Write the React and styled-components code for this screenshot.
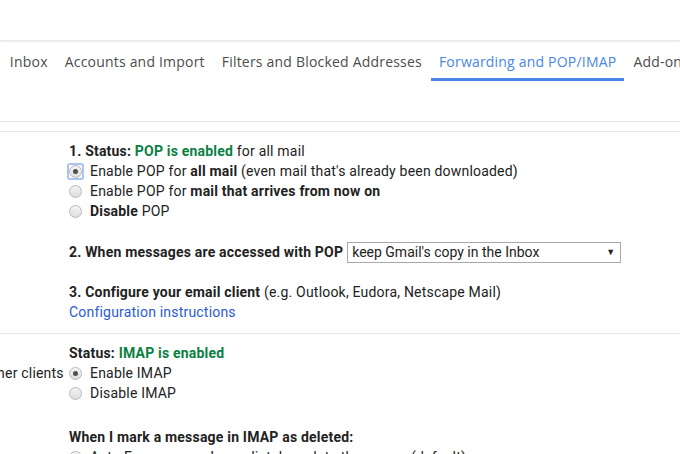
import React from 'react';
import styled, { createGlobalStyle } from 'styled-components';

// how far the settings page is scrolled to the right
const SCROLL = 187;

const GlobalStyle = createGlobalStyle`
  html, body {
    margin: 0;
    padding: 0;
    background: #fff;
    overflow: hidden;
  }
  body {
    font-family: Roboto, "Liberation Sans", Arial, sans-serif;
    color: #222;
  }
`;

const Viewport = styled.div`
  width: 680px;
  height: 454px;
  overflow: hidden;
`;

const TopBar = styled.div`
  height: 40px;
  background: #fff;
  border-bottom: 1px solid #e9e9e9;
  box-shadow: 0 1px 2px rgba(0, 0, 0, 0.07);
`;

const Page = styled.div`
  width: ${680 + SCROLL + 120}px;
  margin-left: -${SCROLL}px;
`;

const TabBar = styled.div`
  display: flex;
  gap: 1px;
  height: 40px;
  padding-left: 59px;
`;

const Tab = styled.div`
  display: flex;
  align-items: center;
  padding: 3px 8px 0;
  font-family: "Open Sans", Roboto, sans-serif;
  font-size: 14px;
  letter-spacing: 0.2px;
  white-space: nowrap;
  color: ${p => (p.$active ? '#4a86e8' : '#4d4d4d')};
  border-bottom: 3px solid ${p => (p.$active ? '#4a86e8' : 'transparent')};
`;

const Rule = styled.div`
  height: 1px;
  background: #e6e6e6;
  margin-top: ${p => p.$top || 0}px;
`;

const Section = styled.div`
  display: flex;
  padding: 9px 0 11px;
  border-bottom: 1px solid #e6e6e6;
  line-height: 20px;
  font-size: 14px;
  letter-spacing: 0.2px;
`;

const LabelCell = styled.div`
  box-sizing: border-box;
  width: 256px;
  flex: none;
  padding-left: 42px;
`;

const ContentCell = styled.div`
  flex: 1;
  display: flex;
  flex-direction: column;
`;

const Line = styled.div`
  display: flex;
  align-items: center;
  height: 20px;
  white-space: nowrap;
  margin-top: ${p => p.$gap || 0}px;
`;

const Strong = styled.b`
  font-weight: 700;
  color: #222;
`;

const Green = styled.b`
  font-weight: 700;
  color: #0b8043;
`;

const Link = styled.a`
  color: #2a5bd7;
  text-decoration: none;
`;

const RadioBox = styled.span`
  box-sizing: border-box;
  display: inline-flex;
  align-items: center;
  justify-content: center;
  width: 17px;
  height: 17px;
  margin: 0 6px 0 -2px;
  flex: none;
  border: 2px solid ${p => (p.$focused ? '#a9c3f2' : 'transparent')};
  border-radius: 3px;
`;

const RadioDot = styled.span`
  box-sizing: border-box;
  position: relative;
  width: 13px;
  height: 13px;
  border-radius: 50%;
  border: 1px solid #b9b9b9;
  background: linear-gradient(#f3f3f3, #dedede);

  &::after {
    content: '';
    display: ${p => (p.$checked ? 'block' : 'none')};
    position: absolute;
    left: 3px;
    top: 3px;
    width: 5px;
    height: 5px;
    border-radius: 50%;
    background: #505050;
  }
`;

const FakeSelect = styled.div`
  box-sizing: border-box;
  display: flex;
  align-items: center;
  justify-content: space-between;
  width: 274px;
  height: 21px;
  margin-left: 4px;
  padding: 0 5px 0 4px;
  border: 1px solid #a9a9a9;
  font-size: 14px;
  letter-spacing: 0;
  color: #222;
`;

const Arrow = styled.span`
  font-size: 9px;
  color: #222;
`;

function Radio({ checked, focused, children }) {
  return (
    <Line>
      <RadioBox $focused={focused}>
        <RadioDot $checked={checked} />
      </RadioBox>
      <span>{children}</span>
    </Line>
  );
}

export default function App() {
  const tabs = [
    'General',
    'Labels',
    'Inbox',
    'Accounts and Import',
    'Filters and Blocked Addresses',
    'Forwarding and POP/IMAP',
    'Add-ons',
    'Chat',
  ];

  return (
    <Viewport>
      <GlobalStyle />
      <TopBar />
      <Page>
        <TabBar>
          {tabs.map(t => (
            <Tab key={t} $active={t === 'Forwarding and POP/IMAP'}>{t}</Tab>
          ))}
        </TabBar>
        <Rule $top={40} />
        <Rule $top={9} />

        <Section>
          <LabelCell>
            <Strong>POP download:</Strong>
            <div><Link href="#">Learn more</Link></div>
          </LabelCell>
          <ContentCell>
            <Line>
              <Strong>1. Status:&nbsp;</Strong>
              <Green>POP is enabled</Green>&nbsp;for all mail
            </Line>
            <Radio checked focused>
              Enable POP for <Strong>all mail</Strong> (even mail that's already been downloaded)
            </Radio>
            <Radio>
              Enable POP for <Strong>mail that arrives from now on</Strong>
            </Radio>
            <Radio>
              <Strong>Disable</Strong> POP
            </Radio>
            <Line $gap={21}>
              <Strong>2. When messages are accessed with POP</Strong>
              <FakeSelect>
                <span>keep Gmail's copy in the Inbox</span>
                <Arrow>▼</Arrow>
              </FakeSelect>
            </Line>
            <Line $gap={20}>
              <Strong>3. Configure your email client</Strong>&nbsp;(e.g. Outlook, Eudora, Netscape Mail)
            </Line>
            <Line>
              <Link href="#">Configuration instructions</Link>
            </Line>
          </ContentCell>
        </Section>

        <Section>
          <LabelCell>
            <Strong>IMAP access:</Strong>
            <div>(access Gmail from other clients using IMAP)</div>
            <div><Link href="#">Learn more</Link></div>
          </LabelCell>
          <ContentCell>
            <Line>
              <Strong>Status:&nbsp;</Strong>
              <Green>IMAP is enabled</Green>
            </Line>
            <Radio checked>Enable IMAP</Radio>
            <Radio>Disable IMAP</Radio>
            <Line $gap={24}>
              <Strong>When I mark a message in IMAP as deleted:</Strong>
            </Line>
            <Radio checked>Auto-Expunge on - Immediately update the server. (default)</Radio>
            <Radio>Auto-Expunge off - Wait for the client to update the server.</Radio>
          </ContentCell>
        </Section>
      </Page>
    </Viewport>
  );
}
